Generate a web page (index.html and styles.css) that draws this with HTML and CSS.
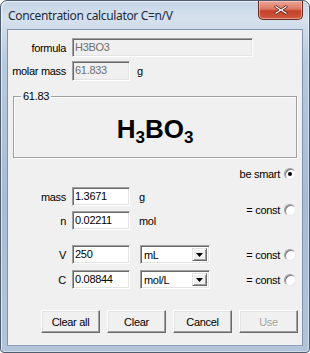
FILE: index.html
```html
<!DOCTYPE html>
<html>
<head>
<meta charset="utf-8">
<link rel="stylesheet" href="styles.css">
</head>
<body>
<div class="window">
  <div class="titlebar">
    <span class="title">Concentration calculator C=n/V</span>
    <div class="close">
      <svg width="18" height="12" viewBox="0 0 18 12"><path d="M4 1.5 L9 5 L14 1.5 L15.5 3 L11 6 L15.5 9 L14 10.5 L9 7 L4 10.5 L2.5 9 L7 6 L2.5 3 Z" fill="#fff" stroke="#5a1a12" stroke-width="0.9" stroke-linejoin="round"/></svg>
    </div>
  </div>
  <div class="client">
    <div class="row r-formula">
      <span class="lbl">formula</span>
      <div class="field disabled wide">H3BO3</div>
    </div>
    <div class="row r-molar">
      <span class="lbl">molar mass</span>
      <div class="field disabled">61.833</div>
      <span class="unit u-molar">g</span>
    </div>
    <div class="group">
      <span class="legend">61.83</span>
      <div class="formula">H<sub>3</sub>BO<sub>3</sub></div>
    </div>
    <div class="smart">
      <span>be smart</span>
      <span class="radio checked"></span>
    </div>
    <div class="mn">
      <div class="mn-fields">
        <div class="row">
          <span class="lbl">mass</span>
          <div class="field">1.3671</div>
          <span class="unit">g</span>
        </div>
        <div class="row r-n">
          <span class="lbl">n</span>
          <div class="field">0.02211</div>
          <span class="unit">mol</span>
        </div>
      </div>
      <div class="const c-mn"><span>= const</span><span class="radio"></span></div>
    </div>
    <div class="row r-v">
      <span class="lbl">V</span>
      <div class="field">250</div>
      <div class="combo"><span class="combo-text">mL</span><span class="combo-btn"><svg width="7" height="4" viewBox="0 0 7 4"><path d="M0 0H7L3.5 4Z" fill="#000"/></svg></span></div>
      <div class="const"><span>= const</span><span class="radio"></span></div>
    </div>
    <div class="row r-c">
      <span class="lbl">C</span>
      <div class="field">0.08844</div>
      <div class="combo"><span class="combo-text">mol/L</span><span class="combo-btn"><svg width="7" height="4" viewBox="0 0 7 4"><path d="M0 0H7L3.5 4Z" fill="#000"/></svg></span></div>
      <div class="const"><span>= const</span><span class="radio"></span></div>
    </div>
    <div class="buttons">
      <button class="btn">Clear all</button>
      <button class="btn">Clear</button>
      <button class="btn">Cancel</button>
      <button class="btn" disabled>Use</button>
    </div>
  </div>
</div>
</body>
</html>
```
FILE: styles.css
```css
html, body {
  margin: 0;
  padding: 0;
  background: #fff;
}
.window {
  width: 310px;
  height: 353px;
  box-sizing: border-box;
  border: 1px solid #4f5d6e;
  border-radius: 7px 7px 4px 4px;
  background: linear-gradient(180deg, #c6d5e6 0px, #d6e1ed 18px, #b8cadf 60px, #a6bbd5 200px, #b3c5da 353px);
  box-shadow: inset 1px 1px 0 rgba(255,255,255,0.6), inset -1px -1px 0 rgba(255,255,255,0.4);
  font-family: "Liberation Sans", Arial, sans-serif;
  font-size: 11px;
  letter-spacing: -0.3px;
  color: #000;
  overflow: hidden;
}
.titlebar {
  height: 28px;
  display: flex;
  align-items: flex-start;
  justify-content: space-between;
}
.title {
  font-family: "Noto Sans", "Open Sans", sans-serif;
  font-size: 12px;
  letter-spacing: -0.35px;
  color: #1e2b3c;
  margin: 7px 0 0 7px;
  line-height: 16px;
}
.close {
  width: 43px;
  height: 18px;
  margin: 0 6px 0 0;
  border: 1px solid #6b2a22;
  border-top: none;
  border-radius: 0 0 5px 5px;
  background: linear-gradient(180deg, #eaa596 0%, #dc7864 45%, #c6402a 55%, #cf5b3e 100%);
  box-shadow: inset 0 0 0 1px rgba(255,220,210,0.5);
  display: flex;
  align-items: center;
  justify-content: center;
}
.client {
  margin: 0 6px;
  height: 315px;
  background: #f0f0f0;
  border: 1px solid #7f93aa;
  border-bottom-color: #8da0b6;
  display: flex;
  flex-direction: column;
}
.row {
  display: flex;
  align-items: center;
  height: 19px;
}
.lbl {
  width: 58px;
  text-align: right;
  margin-right: 6px;
  white-space: nowrap;
}
.r-formula { margin-top: 8px; }
.r-molar { margin-top: 4px; height: 20px; }
.field {
  box-sizing: border-box;
  width: 58px;
  height: 100%;
  background: #fff;
  border-style: solid;
  border-width: 1px;
  border-color: #a0a0a0 #fff #fff #a0a0a0;
  box-shadow: inset 1px 1px 0 #696969, inset -1px -1px 0 #e3e3e3;
  padding: 0 2px;
  line-height: 16px;
  white-space: nowrap;
}
.field.wide { width: 181px; }
.field.disabled {
  background: #f0f0f0;
  color: #6d6d6d;
}
.unit { margin-left: 9px; }
.u-molar { margin-left: 7px; }
.group {
  margin: 15px 0 0 5px;
  width: 284px;
  height: 62px;
  box-sizing: border-box;
  border: 1px solid #a0a0a0;
  box-shadow: 1px 1px 0 #fff, inset 1px 1px 0 #fff;
  position: relative;
  display: flex;
  align-items: center;
  justify-content: center;
}
.legend {
  position: absolute;
  left: 7px;
  top: -7px;
  background: #f0f0f0;
  padding: 0 2px;
  line-height: 13px;
}
.formula {
  font-family: "Liberation Sans", Arial, sans-serif;
  font-weight: bold;
  font-size: 26px;
  letter-spacing: 0;
  line-height: 28px;
  margin-top: 3px;
}
.formula sub {
  font-size: 17px;
  vertical-align: -5px;
  line-height: 0;
}
.smart {
  display: flex;
  justify-content: flex-end;
  align-items: center;
  height: 14px;
  margin-top: 9px;
  padding-right: 6px;
}
.radio {
  display: inline-block;
  width: 12px;
  height: 12px;
  margin-left: 4px;
  box-sizing: border-box;
  border-radius: 50%;
  background: #fff;
  border: 1px solid;
  border-color: #a0a0a0 #e8e8e8 #e8e8e8 #a0a0a0;
  box-shadow: inset 1px 1px 0 #7a7a7a;
  position: relative;
}
.radio.checked::after {
  content: "";
  position: absolute;
  left: 3px;
  top: 3px;
  width: 4px;
  height: 4px;
  border-radius: 50%;
  background: #000;
}
.mn {
  display: flex;
  align-items: center;
  margin-top: 6px;
}
.mn-fields {
  display: flex;
  flex-direction: column;
}
.r-n { margin-top: 5px; }
.const {
  margin-left: auto;
  display: flex;
  align-items: center;
  padding-right: 6px;
}
.c-mn { margin-top: 3px; }
.r-v { margin-top: 15px; }
.r-c { margin-top: 6px; }
.combo {
  box-sizing: border-box;
  width: 70px;
  height: 100%;
  margin-left: 10px;
  background: #fff;
  border-style: solid;
  border-width: 1px;
  border-color: #a0a0a0 #fff #fff #a0a0a0;
  box-shadow: inset 1px 1px 0 #696969, inset -1px -1px 0 #e3e3e3;
  display: flex;
  align-items: stretch;
  padding: 2px;
}
.combo-text {
  flex: 1;
  line-height: 14px;
  padding-left: 1px;
}
.combo-btn {
  width: 15px;
  box-sizing: border-box;
  background: #f0f0f0;
  border: 1px solid;
  border-color: #e3e3e3 #696969 #696969 #e3e3e3;
  box-shadow: inset 1px 1px 0 #fff, inset -1px -1px 0 #a0a0a0;
  display: flex;
  align-items: center;
  justify-content: center;
}
.buttons {
  display: flex;
  gap: 7px;
  margin: 21px 0 0 33px;
}
.btn {
  box-sizing: border-box;
  width: 59px;
  height: 23px;
  padding: 0;
  font-family: "Liberation Sans", Arial, sans-serif;
  font-size: 11px;
  letter-spacing: -0.3px;
  color: #000;
  background: #f0f0f0;
  border: 1px solid;
  border-color: #fff #696969 #696969 #fff;
  box-shadow: inset -1px -1px 0 #a0a0a0, inset 1px 1px 0 #e3e3e3;
  border-radius: 0;
}
.btn:disabled {
  color: #a0a0a0;
  text-shadow: 1px 1px 0 #fff;
}
```
